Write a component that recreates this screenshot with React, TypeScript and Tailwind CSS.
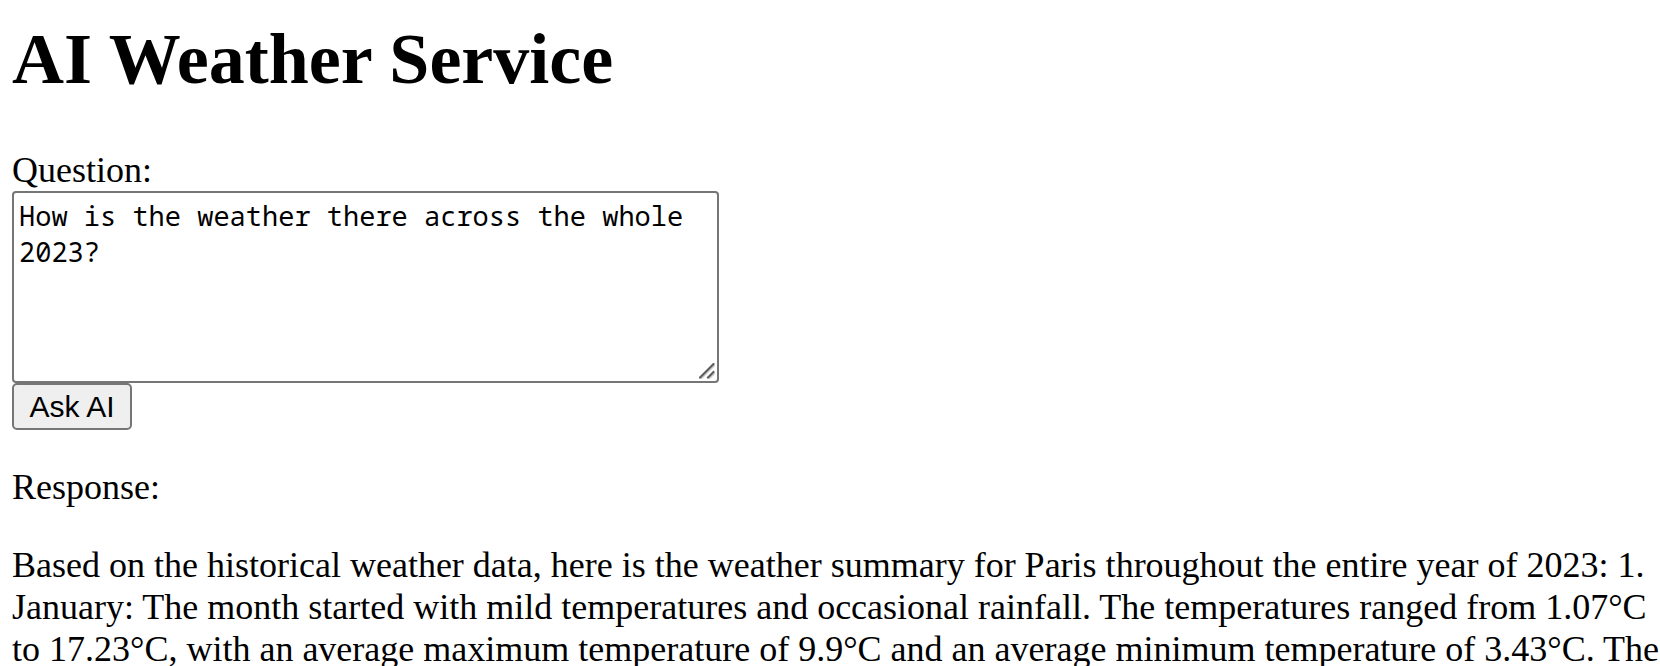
function ResizeGrip() {
  return (
    <svg
      className="pointer-events-none absolute right-1 bottom-1 h-4 w-4"
      viewBox="0 0 16 16"
      fill="none"
      aria-hidden="true"
    >
      <path d="M2 15.5 15.5 2M10 15.5 15.5 10" stroke="#c8c8c8" strokeWidth="2" />
      <path d="M1 14.5 14.5 1M9 14.5 14.5 9" stroke="#5c5c5c" strokeWidth="2" strokeLinecap="square" />
    </svg>
  );
}

export default function App() {
  return (
    <main className="h-screen overflow-hidden bg-white pl-3 font-['Liberation_Serif',serif] text-[36px] leading-[42px] text-black">
      <h1 className="pt-[18px] text-[72px] leading-[82px] font-bold">AI Weather Service</h1>
      <form className="mt-[49px] flex flex-col items-start" onSubmit={(e) => e.preventDefault()}>
        <label htmlFor="question">Question:</label>
        <div className="relative max-w-full">
          <textarea
            id="question"
            className="block h-[192px] w-[707px] max-w-full resize-none rounded-[4px] border-2 border-[#767676] bg-white px-[5px] py-[5px] font-['Noto_Sans_Mono','DejaVu_Sans_Mono',monospace] text-[27px] leading-9"
            defaultValue="How is the weather there across the whole 2023?"
          />
          <ResizeGrip />
        </div>
        <button className="h-[47px] w-[120px] rounded-[5px] border-2 border-[#767676] bg-[#efefef] font-['Liberation_Sans',sans-serif] text-[30px] leading-9">
          Ask AI
        </button>
      </form>
      <p className="mt-9">Response:</p>
      <p className="mt-9">
        Based on the historical weather data, here is the weather summary for Paris throughout the entire year of 2023: 1. January: The month started with mild temperatures and occasional rainfall. The temperatures ranged from 1.07°C to 17.23°C, with an average maximum temperature of 9.9°C and an average minimum temperature of 3.43°C. The
      </p>
    </main>
  );
}
